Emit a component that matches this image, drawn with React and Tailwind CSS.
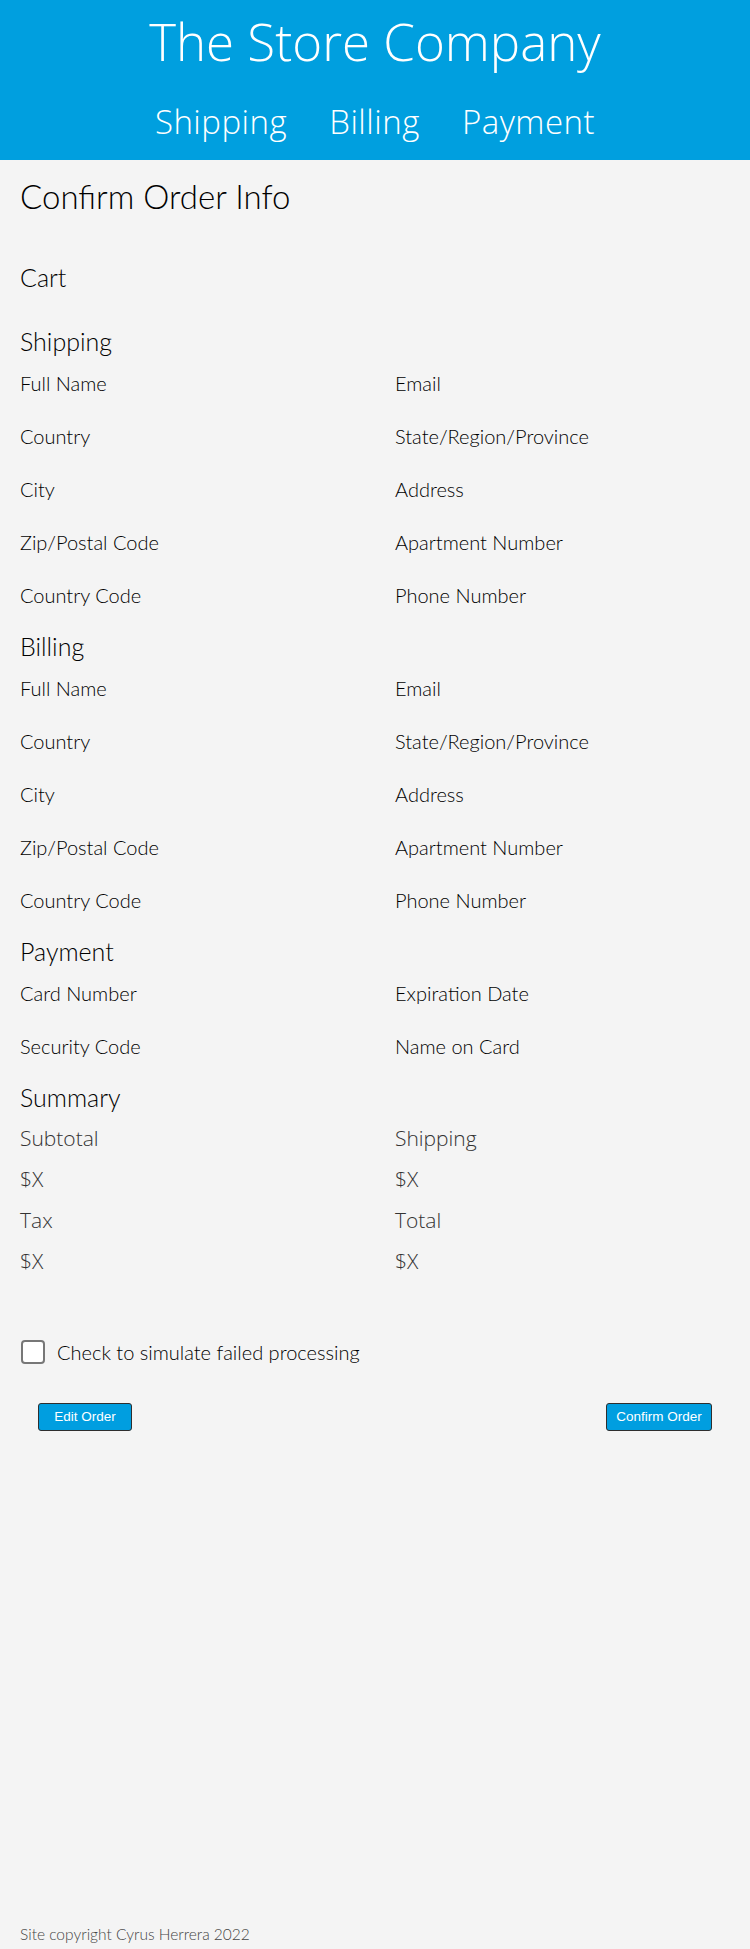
import React from "react";

const lato = { fontFamily: '"Lato", "Liberation Sans", sans-serif' };

function Heading({ children }) {
  return (
    <h2
      className="text-[25px] leading-[28px] font-light text-black"
      style={lato}
    >
      {children}
    </h2>
  );
}

function FieldGrid({ labels }) {
  return (
    <div className="mt-4 grid grid-cols-2 gap-x-10 gap-y-[29px]">
      {labels.map((l, i) => (
        <div
          key={i}
          className="text-[20px] leading-[24px] font-light text-black font-['Lato',sans-serif]"
        >
          {l}
        </div>
      ))}
    </div>
  );
}

const addressLabels = [
  "Full Name",
  "Email",
  "Country",
  "State/Region/Province",
  "City",
  "Address",
  "Zip/Postal Code",
  "Apartment Number",
  "Country Code",
  "Phone Number",
];

export default function App() {
  return (
    <div className="min-h-[1949px] flex flex-col bg-[#f4f4f4]">
      <header className="bg-[#009fdf] h-[160px] pt-[16px] flex flex-col items-center text-white font-['Open_Sans',sans-serif]">
        <h1 className="text-[51px] leading-[50px] font-light">The Store Company</h1>
        <nav className="mt-[36px] flex gap-[42px] text-[33px] leading-[40px] font-light tracking-[0.5px]">
          <span>Shipping</span>
          <span>Billing</span>
          <span>Payment</span>
        </nav>
      </header>

      <main className="px-5 pt-[18px] flex-1 flex flex-col">
        <h1
          className="text-[33px] leading-[36px] font-light text-black"
          style={lato}
        >
          Confirm Order Info
        </h1>
        <div className="mt-[49px]">
          <Heading>Cart</Heading>
        </div>

        <section className="mt-[36px]">
          <Heading>Shipping</Heading>
          <FieldGrid labels={addressLabels} />
        </section>

        <section className="mt-[25px]">
          <Heading>Billing</Heading>
          <FieldGrid labels={addressLabels} />
        </section>

        <section className="mt-[25px]">
          <Heading>Payment</Heading>
          <FieldGrid
            labels={[
              "Card Number",
              "Expiration Date",
              "Security Code",
              "Name on Card",
            ]}
          />
        </section>

        <section className="mt-[25px]">
          <Heading>Summary</Heading>
          <div className="mt-[15px] grid grid-cols-2 gap-x-10 gap-y-[17px] text-[21px] leading-[24px] font-light text-[#333] font-['Open_Sans',sans-serif]">
            <div>Subtotal</div>
            <div>Shipping</div>
            <div>$X</div>
            <div>$X</div>
            <div>Tax</div>
            <div>Total</div>
            <div>$X</div>
            <div>$X</div>
          </div>
        </section>

        <label className="mt-[67px] flex items-center gap-3 pl-px">
          <span className="w-6 h-6 rounded-[4px] border-2 border-[#777] bg-white shrink-0" />
          <span
            className="text-[20px] leading-[24px] font-light text-black"
            style={lato}
          >
            Check to simulate failed processing
          </span>
        </label>

        <div className="mt-[39px] px-[18px] flex justify-between font-['Liberation_Sans',Arial,sans-serif]">
          <button className="h-[28px] w-[94px] bg-[#009ee0] border border-[#2e2e2e] rounded-[3px] text-white text-[13.5px]">
            Edit Order
          </button>
          <button className="h-[28px] w-[106px] bg-[#009ee0] border border-[#2e2e2e] rounded-[3px] text-white text-[13.5px]">
            Confirm Order
          </button>
        </div>

        <footer
          className="mt-auto pb-[5px] text-[15.5px] leading-[20px] font-light text-[#444]"
          style={lato}
        >
          Site copyright Cyrus Herrera 2022
        </footer>
      </main>
    </div>
  );
}
